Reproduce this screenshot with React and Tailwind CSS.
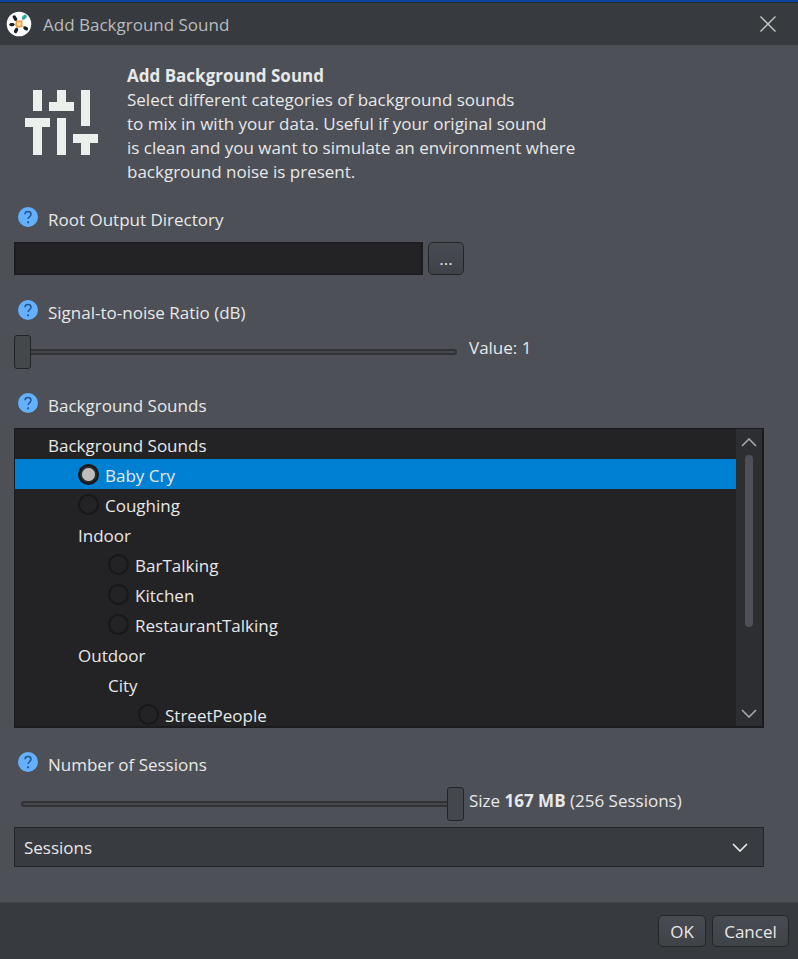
import { useState } from "react";

const SOUNDS = [
  { name: "Background Sounds", level: 0 },
  { name: "Baby Cry", level: 1, leaf: true },
  { name: "Coughing", level: 1, leaf: true },
  { name: "Indoor", level: 1 },
  { name: "BarTalking", level: 2, leaf: true },
  { name: "Kitchen", level: 2, leaf: true },
  { name: "RestaurantTalking", level: 2, leaf: true },
  { name: "Outdoor", level: 1 },
  { name: "City", level: 2 },
  { name: "StreetPeople", level: 3, leaf: true },
];

const INDENT = ["pl-[33px]", "pl-[63px]", "pl-[93px]", "pl-[123px]"];

function AppLogo() {
  return (
    <svg className="size-[26px] shrink-0" viewBox="0 0 26 26" aria-hidden="true">
      <circle cx="13" cy="13" r="12.3" fill="#fff" />
      <g stroke="#b5aca2" strokeWidth="1.2">
        <path d="M13 13 18 6.5M13 13 8.6 6.6M13 13 5.5 13.6M13 13 9.8 20M13 13 20 17" />
      </g>
      <g stroke="#1c1d2b" strokeWidth="3.4" strokeLinecap="round">
        <path d="M8.3 6 9.6 8.2" />
        <path d="M5 13.6h1.8" />
        <path d="M10.6 18.6 9.6 20.6" />
        <path d="M19 17 20.4 17.8" />
      </g>
      <path d="M17.7 6.9 19 5.4" stroke="#1fae9c" strokeWidth="3.6" strokeLinecap="round" />
      <rect x="10.4" y="10.4" width="5.2" height="5.2" rx="1" fill="#ffe2b8" stroke="#f5a040" strokeWidth="1.8" />
    </svg>
  );
}

function MixerIcon() {
  return (
    <svg className="h-[67px] w-[74px] shrink-0" viewBox="0 0 74 67" fill="#ecf0ec" aria-hidden="true">
      <path d="M8 0h9v21H8zM32 0h9v12h8v9H24v-9h8zM56 0h9v36h-9z" />
      <path d="M0 28h25v9h-8v28H8V37H0zM32 28h9v37h-9zM48 44h25v9h-8v12h-9V53h-8z" />
    </svg>
  );
}

function HelpIcon() {
  return (
    <svg className="mb-1 size-5" viewBox="0 0 20 20" fill="none" aria-hidden="true">
      <circle cx="10" cy="10" r="10" fill="#64b0ff" />
      <path d="M7 7.3C7 5.5 8.3 4.6 10 4.6s3 1 3 2.6c0 2.2-2.8 2.4-2.8 4.9" stroke="#24568a" strokeWidth="1.5" />
      <circle cx="10.1" cy="15.3" r="1.1" fill="#24568a" />
    </svg>
  );
}

function Chevron({ up = false, className = "" }) {
  return (
    <svg className={`h-[9px] w-4 ${className}`} viewBox="0 0 16 9" fill="none" stroke="currentColor" strokeWidth="1.7" aria-hidden="true">
      <path d={up ? "M1 8l7-7 7 7" : "M1 1l7 7 7-7"} />
    </svg>
  );
}

function Field({ label, id, children }) {
  return (
    <section>
      <div className="mb-[11px] flex h-6 items-center gap-2.5 pl-1">
        <HelpIcon />
        {id ? (
          <label htmlFor={id} className="pt-0.5">
            {label}
          </label>
        ) : (
          <h3 className="pt-0.5">{label}</h3>
        )}
      </div>
      {children}
    </section>
  );
}

function Slider({ id, min, max, value, onChange }) {
  return (
    <div className="relative h-[34px] w-3/5 shrink-0">
      <div className="absolute inset-x-[7px] top-3.5 h-1.5 rounded-[3px] border-2 border-[#323336] bg-[#45474b]" />
      <input
        id={id}
        type="range"
        min={min}
        max={max}
        value={value}
        onChange={(e) => onChange(Number(e.target.value))}
        className="relative block h-full w-full appearance-none bg-transparent [&::-webkit-slider-thumb]:h-[34px] [&::-webkit-slider-thumb]:w-[17px] [&::-webkit-slider-thumb]:appearance-none [&::-webkit-slider-thumb]:rounded-[3px] [&::-webkit-slider-thumb]:border [&::-webkit-slider-thumb]:border-solid [&::-webkit-slider-thumb]:border-[#232426] [&::-webkit-slider-thumb]:bg-[#44474c]"
      />
    </div>
  );
}

const BUTTON = "rounded-[5px] border border-[#242527] bg-linear-to-b from-[#484b52] to-[#3f4246]";

export default function App() {
  const [dir, setDir] = useState("");
  const [ratio, setRatio] = useState(1);
  const [sessions, setSessions] = useState(256);
  const [sound, setSound] = useState("Baby Cry");

  return (
    <div className="flex min-h-screen flex-col bg-[#4d5057] font-['Open_Sans','Noto_Sans',sans-serif] text-[17px] leading-6 text-[#e8e8e8]">
      <header className="flex h-[45px] items-center justify-between border-t-2 border-[#0a46a0] bg-[#373a3e] pr-[22px] pl-1.5 shadow-[inset_0_1px_0_#26282b]">
        <div className="flex items-center gap-[11px] text-[#b9bcbf]">
          <AppLogo />
          <h1 className="pt-0.5">Add Background Sound</h1>
        </div>
        <button type="button" aria-label="Close" className="text-[#c6c8ca]">
          <svg className="size-4" viewBox="0 0 16 16" fill="none" stroke="currentColor" strokeWidth="1.4" aria-hidden="true">
            <path d="M.5.5l15 15M15.5.5l-15 15" />
          </svg>
        </button>
      </header>

      <main className="flex flex-1 flex-col gap-6 pt-[18px] pr-[34px] pb-[35px] pl-3.5">
        <div className="flex h-[120px] items-center gap-7 pl-[11px]">
          <MixerIcon />
          <div className="pt-0.5">
            <h2 className="font-bold">Add Background Sound</h2>
            <p>
              Select different categories of background sounds
              <br />
              to mix in with your data. Useful if your original sound
              <br />
              is clean and you want to simulate an environment where
              <br />
              background noise is present.
            </p>
          </div>
        </div>

        <Field label="Root Output Directory" id="root-dir">
          <div className="flex h-[34px] w-3/5 items-start gap-[5px]">
            <input
              id="root-dir"
              type="text"
              value={dir}
              onChange={(e) => setDir(e.target.value)}
              className="h-[33px] min-w-0 flex-1 border-2 border-[#1d1d1f] bg-[#232325] px-2"
            />
            <button type="button" aria-label="Browse" className={`h-[33px] w-9 ${BUTTON}`}>
              ...
            </button>
          </div>
        </Field>

        <Field label="Signal-to-noise Ratio (dB)" id="ratio">
          <div className="flex gap-[5px]">
            <Slider id="ratio" min={1} max={30} value={ratio} onChange={setRatio} />
            <output htmlFor="ratio" className="pt-px">
              Value: {ratio}
            </output>
          </div>
        </Field>

        <Field label="Background Sounds">
          <div className="flex h-[300px] overflow-hidden border border-r-2 border-b-2 border-[#1b1b1d] bg-[#232325]">
            <ul className="min-w-0 flex-1" aria-label="Background Sounds">
              {SOUNDS.map(({ name, level, leaf }) => (
                <li key={name} className={sound === name ? "bg-[#0080d2]" : ""}>
                  {leaf ? (
                    <label className={`flex h-[30px] items-center gap-1.5 ${INDENT[level]}`}>
                      <input
                        type="radio"
                        name="sound"
                        checked={sound === name}
                        onChange={() => setSound(name)}
                        className="size-[21px] appearance-none rounded-full border-2 border-[#18181a] bg-[#232325] checked:bg-[radial-gradient(circle,#bdbdbd_6px,#2a2a2c_7px)]"
                      />
                      <span className="pt-1">{name}</span>
                    </label>
                  ) : (
                    <div className={`flex h-[30px] items-center pt-1 ${INDENT[level]}`}>{name}</div>
                  )}
                </li>
              ))}
            </ul>
            <div className="flex w-[26px] flex-col items-center bg-[#2d2e32] text-[#a2a4a8]">
              <button type="button" aria-label="Scroll up" className="flex h-[26px] w-full items-center justify-center">
                <Chevron up />
              </button>
              <div className="w-full flex-1 px-[9px]">
                <div className="h-[70%] rounded-full bg-[#4d5057]" />
              </div>
              <button type="button" aria-label="Scroll down" className="flex h-[26px] w-full items-center justify-center">
                <Chevron />
              </button>
            </div>
          </div>
        </Field>

        <Field label="Number of Sessions" id="sessions">
          <div className="flex gap-[5px]">
            <Slider id="sessions" min={1} max={256} value={sessions} onChange={setSessions} />
            <output htmlFor="sessions" className="pt-0.5">
              Size <b>167 MB</b> ({sessions} Sessions)
            </output>
          </div>
          <div className="relative mt-1.5">
            <select
              aria-label="Sessions"
              className="block h-10 w-full appearance-none border border-[#242527] bg-[#383b3f] px-[9px] pt-0.5"
            >
              <option>Sessions</option>
            </select>
            <Chevron className="pointer-events-none absolute top-4 right-4" />
          </div>
        </Field>
      </main>

      <footer className="flex h-[57px] items-center justify-end gap-1.5 border-t border-[#43464b] bg-[#373a3e] pr-[9px]">
        <button type="button" className={`h-8 w-12 pt-0.5 ${BUTTON}`}>
          OK
        </button>
        <button type="button" className={`h-8 w-[77px] pt-0.5 ${BUTTON}`}>
          Cancel
        </button>
      </footer>
    </div>
  );
}
